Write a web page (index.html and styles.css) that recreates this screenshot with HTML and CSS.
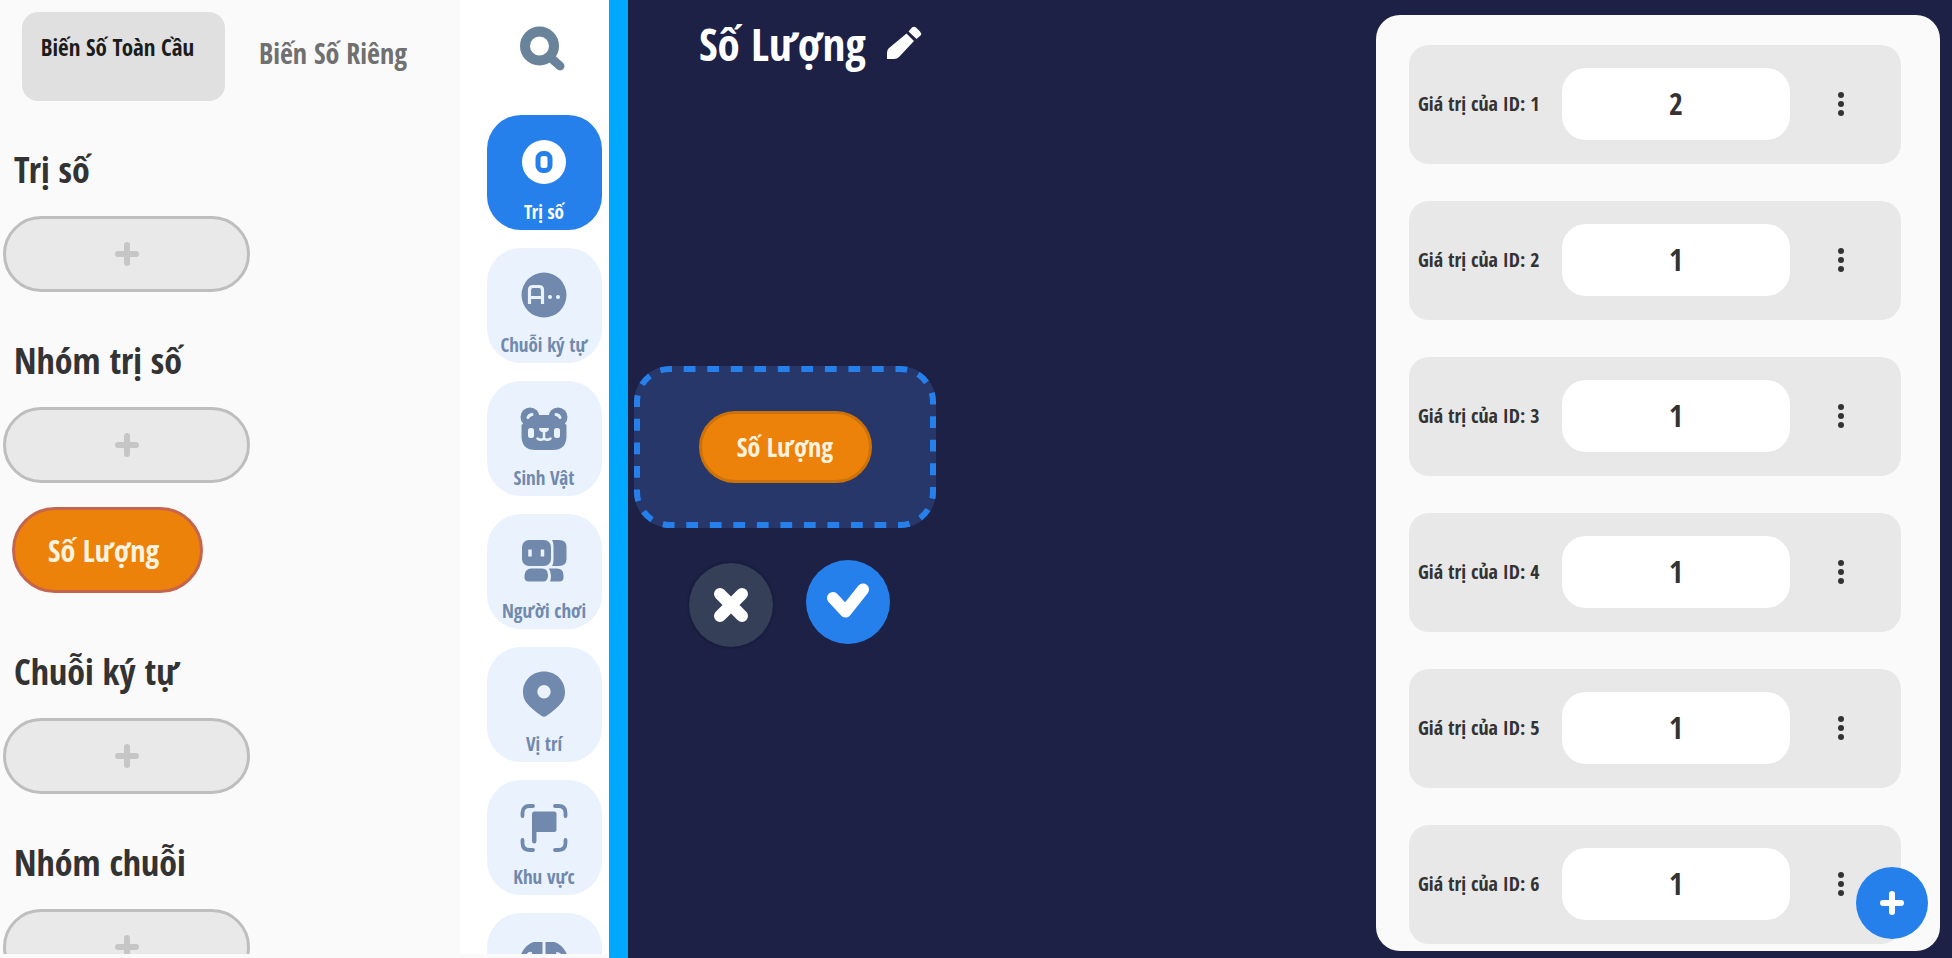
FILE: index.html
```
<!DOCTYPE html>
<html lang="vi">
<head>
<meta charset="utf-8">
<meta name="viewport" content="width=device-width, initial-scale=1">
<title>Số Lượng</title>
<link rel="stylesheet" href="styles.css">
</head>
<body>
<svg class="symbols" aria-hidden="true">
  <symbol id="plus" viewBox="0 0 24 24"><path d="M12 3v18M3 12h18" fill="none" stroke="currentColor" stroke-width="6" stroke-linecap="round"/></symbol>
  <symbol id="dots" viewBox="0 0 8 26"><circle cx="4" cy="4" r="3"/><circle cx="4" cy="13" r="3"/><circle cx="4" cy="22" r="3"/></symbol>
</svg>
<div class="app">
  <aside class="variables">
    <div class="tabs" role="tablist">
      <button class="tab tab-active" role="tab" aria-selected="true">Biến Số Toàn Cầu</button>
      <button class="tab" role="tab" aria-selected="false">Biến Số Riêng</button>
    </div>
    <section class="group">
      <h2>Trị số</h2>
      <button class="add" aria-label="Trị số"><svg><use href="#plus"/></svg></button>
    </section>
    <section class="group">
      <h2>Nhóm trị số</h2>
      <button class="add" aria-label="Nhóm trị số"><svg><use href="#plus"/></svg></button>
      <button class="variable">Số Lượng</button>
    </section>
    <section class="group">
      <h2>Chuỗi ký tự</h2>
      <button class="add" aria-label="Chuỗi ký tự"><svg><use href="#plus"/></svg></button>
    </section>
    <section class="group">
      <h2>Nhóm chuỗi</h2>
      <button class="add" aria-label="Nhóm chuỗi"><svg><use href="#plus"/></svg></button>
    </section>
  </aside>

  <nav class="rail">
    <button class="search" aria-label="Tìm kiếm">
      <svg viewBox="0 0 48 48"><circle cx="19.500" cy="21" r="14.500" fill="none" stroke="#69839a" stroke-width="10"/><path d="M31 33l9 8" stroke="#69839a" stroke-width="9" stroke-linecap="round"/></svg>
    </button>
    <button class="tile tile-active">
      <svg viewBox="0 0 48 48"><circle cx="24" cy="23" r="22" fill="#fff"/><rect x="18" y="14.500" width="12" height="17" rx="5" fill="none" stroke="#2680eb" stroke-width="5"/></svg>
      <span>Trị số</span>
    </button>
    <button class="tile">
      <svg viewBox="0 0 48 48"><circle cx="24" cy="23" r="22.500" fill="#7089ac"/><path d="M9.500 32V18q0-3.500 3.500-3.500h6q3.500 0 3.500 3.500v14M9.500 25.500h13" fill="none" stroke="#eaf2fe" stroke-width="3.200"/><circle cx="30" cy="25" r="2" fill="#eaf2fe"/><circle cx="38" cy="25" r="2" fill="#eaf2fe"/></svg>
      <span>Chuỗi ký tự</span>
    </button>
    <button class="tile">
      <svg viewBox="0 0 48 48"><g fill="#7089ac"><circle cx="10" cy="12" r="9.500"/><circle cx="38" cy="12" r="9.500"/><path d="M12 10h24l10.500 10V31q0 14-14 14h-17q-14 0-14-14V20z"/></g><g fill="none" stroke="#eaf2fe" stroke-linecap="round"><path d="M8 12.500q1-2.500 4-3M40 12.500q-1-2.500-4-3" stroke-width="3"/><path d="M24 27v7M17.500 33.500q3 2.500 6.500 0q3.500 2.500 6.500 0" stroke-width="2.500"/></g><g fill="#eaf2fe"><rect x="8" y="23" width="6" height="10" rx="2.500"/><rect x="34" y="23" width="6" height="10" rx="2.500"/><path d="M19 23h10q0 4-5 4.500q-5-.5-5-4.500z"/></g></svg>
      <span>Sinh Vật</span>
    </button>
    <button class="tile">
      <svg viewBox="0 0 48 48"><g fill="#7089ac"><rect x="2" y="2" width="29" height="26" rx="7"/><path d="M32 2h7q7.500 0 7.500 7v12q0 7-7.500 7h-7q1.500-2 1.500-7V9q0-5-1.500-7z"/><path d="M11 30.500h11q6 0 6 7q0 6-5 6H9q-4.500 0-4.500-4v-2.500q1-6.500 6.500-6.500z"/><path d="M29 30.500h8q6.500 0 6.500 7v2q0 4-4 4H30q1-2 1-5.500t-2-7.500z"/></g><path d="M10 11.500v7M22.500 11.500v7" stroke="#eaf2fe" stroke-width="3.500"/></svg>
      <span>Người chơi</span>
    </button>
    <button class="tile">
      <svg viewBox="0 0 48 48"><path fill-rule="evenodd" fill="#7089ac" d="M24 0.500C12 0.500 3 9.500 3 21c0 9 5 14 18 23.500q3 2.500 6 0C40 35 45 30 45 21 45 9.500 36 .5 24 .5zm0 13.500a6.700 6.700 0 1 1 0 13.400 6.700 6.700 0 0 1 0-13.400z"/></svg>
      <span>Vị trí</span>
    </button>
    <button class="tile">
      <svg viewBox="0 0 48 48"><path d="M2.500 12V9q0-7 7-7H13M35 2h3.500q7 0 7 7v3M2.500 36v3q0 7 7 7H13M35 46h3.500q7 0 7-7v-3" fill="none" stroke="#7089ac" stroke-width="3.800" stroke-linecap="round"/><path fill="#7089ac" d="M14.500 7.500H34q2.500 0 2.500 2.500v15.500q0 2.500-2.500 2.500H16.500V37q0 2.500-2.250 2.500T12 37V10q0-2.500 2.500-2.500z"/></svg>
      <span>Khu vực</span>
    </button>
    <button class="tile" aria-label="Khác">
      <svg viewBox="0 0 48 48"><path fill="#7089ac" d="M22.500 5v18H0q0-6 4.500-11.500T14 5zM25.500 5v18H48q0-6-4.500-11.500T34 5z"/><path fill="#eaf2fe" d="M6 18q2-4 6-3v4zM36 15q5 0 6 4h-5z"/></svg>
    </button>
  </nav>

  <main class="editor">
    <header class="title">
      <h1>Số Lượng</h1>
      <button class="edit" aria-label="Sửa tên">
        <svg viewBox="0 0 36 36"><path d="M20.500 8.500L28 16L13 32Q11 34 8 34H1V28Q1 25 2.500 23.500zM22.500 6.500L26 2.500Q28 .8 30 2.500L34 6.500Q36 8.500 34.500 10.500L30.500 14z" fill="#fff"/></svg>
      </button>
    </header>
    <div class="workspace">
      <div class="drop">
        <svg class="outline" viewBox="0 0 302 162"><rect x="3" y="3" width="296" height="156" rx="33" pathLength="864" fill="none" stroke="#2680eb" stroke-width="6" stroke-dasharray="12 12" stroke-dashoffset="10"/></svg>
        <button class="block">Số Lượng</button>
      </div>
      <div class="actions">
        <button class="round cancel" aria-label="Hủy"><svg viewBox="0 0 84 84"><path d="M31 31l22 22M53 31L31 53" stroke="#fff" stroke-width="12" stroke-linecap="round"/></svg></button>
        <button class="round confirm" aria-label="Xác nhận"><svg viewBox="0 0 84 84"><path d="M27 38l12.500 13.500L57 29.500" fill="none" stroke="#fff" stroke-width="12" stroke-linecap="round" stroke-linejoin="round"/></svg></button>
      </div>
    </div>
  </main>

  <div class="values-column">
    <section class="values">
      <div class="row"><label for="v1">Giá trị của ID: 1</label><input id="v1" type="text" value="2"><button class="more" aria-label="Tùy chọn 1"><svg><use href="#dots"/></svg></button></div>
      <div class="row"><label for="v2">Giá trị của ID: 2</label><input id="v2" type="text" value="1"><button class="more" aria-label="Tùy chọn 2"><svg><use href="#dots"/></svg></button></div>
      <div class="row"><label for="v3">Giá trị của ID: 3</label><input id="v3" type="text" value="1"><button class="more" aria-label="Tùy chọn 3"><svg><use href="#dots"/></svg></button></div>
      <div class="row"><label for="v4">Giá trị của ID: 4</label><input id="v4" type="text" value="1"><button class="more" aria-label="Tùy chọn 4"><svg><use href="#dots"/></svg></button></div>
      <div class="row"><label for="v5">Giá trị của ID: 5</label><input id="v5" type="text" value="1"><button class="more" aria-label="Tùy chọn 5"><svg><use href="#dots"/></svg></button></div>
      <div class="row"><label for="v6">Giá trị của ID: 6</label><input id="v6" type="text" value="1"><button class="more" aria-label="Tùy chọn 6"><svg><use href="#dots"/></svg></button></div>
    </section>
    <button class="fab" aria-label="Thêm giá trị"><svg viewBox="0 0 72 72"><path d="M36 27v18M27 36h18" stroke="#fff" stroke-width="6" stroke-linecap="round"/></svg></button>
  </div>
</div>
</body>
</html>
```

FILE: styles.css
```
* { box-sizing: border-box; }

body {
  margin: 0;
  background: #fafafa;
  color: #333;
  font-family: "Open Sans Condensed", "Roboto Condensed", "Open Sans", sans-serif;
  font-weight: 700;
}

h1, h2 { margin: 0; font-weight: 700; }

button {
  margin: 0;
  padding: 0;
  border: 0;
  background: none;
  color: inherit;
  font: inherit;
  cursor: pointer;
}

svg { display: block; }

.symbols { position: absolute; width: 0; height: 0; }

.app {
  display: grid;
  grid-template-columns: 460px 149px 1fr 576px;
  height: 100vh;
  overflow: hidden;
}

/* Variable list */
.variables {
  display: flex;
  flex-direction: column;
  margin-bottom: 4px;
  overflow: hidden;
  background: #fafafa;
}

.tabs {
  display: flex;
  flex: none;
  gap: 34px;
  padding: 12px 22px 47px;
}

.tab {
  padding-bottom: 8px;
  color: #707070;
  font-size: 28px;
}

.tab-active {
  width: 203px;
  height: 89px;
  padding: 0 12px 20px 0;
  border-radius: 16px;
  background: #e0e0e0;
  color: #1c1c1c;
  font-size: 23px;
}

.group {
  display: flex;
  flex: none;
  flex-direction: column;
  align-items: flex-start;
  gap: 24px;
  padding: 0 3px 47px;
}

.group h2 {
  padding-left: 11px;
  font-size: 36px;
  line-height: 44px;
}

.add {
  display: grid;
  place-items: center;
  width: 247px;
  height: 76px;
  border: 3px solid #bebebe;
  border-radius: 38px;
  background: #e9e9e9;
  color: #c6c6c6;
}

.add svg { width: 24px; height: 24px; }

.variable {
  margin: 0 9px 10px;
  padding: 0 33px;
  width: 191px;
  height: 86px;
  border: 3px solid #c5654e;
  border-radius: 43px;
  background: #ec8209;
  color: #fff3e0;
  font-size: 30px;
  text-align: left;
}

/* Category rail */
.rail {
  display: flex;
  flex-direction: column;
  align-items: center;
  gap: 18px;
  margin-bottom: 4px;
  padding-left: 19px;
  overflow: hidden;
  background: #fff;
}

.search {
  flex: none;
  height: 97px;
}

.search svg { width: 48px; height: 48px; }

.tile {
  display: flex;
  flex: none;
  flex-direction: column;
  align-items: center;
  gap: 9px;
  width: 115px;
  height: 115px;
  padding-top: 24px;
  border-radius: 34px;
  background: #eaf2fe;
  color: #7089ac;
  font-size: 19px;
  line-height: 32px;
}

.tile svg { width: 48px; height: 48px; }

.tile-active { background: #2680eb; color: #fff; }

/* Editor */
.editor {
  border-left: 19px solid #00a9ff;
  background: #1c2145;
}

.title {
  display: flex;
  align-items: center;
  gap: 20px;
  height: 86px;
  padding-left: 71px;
  color: #fff;
}

.title h1 { font-size: 45px; }

.edit svg { width: 36px; height: 36px; }

.workspace {
  display: flex;
  flex-direction: column;
  align-items: flex-start;
  gap: 32px;
  padding: 280px 6px 0;
}

.drop {
  position: relative;
  display: grid;
  place-items: center;
  width: 302px;
  height: 162px;
  border-radius: 36px;
  background: #27376a;
}

.outline {
  position: absolute;
  inset: 0;
  width: 100%;
  height: 100%;
}

.block {
  width: 173px;
  height: 72px;
  border: 3px solid #cd7206;
  border-radius: 36px;
  background: #ec8209;
  color: #fff3e0;
  font-size: 26px;
}

.actions {
  display: flex;
  gap: 33px;
  padding-left: 55px;
}

.round {
  width: 84px;
  height: 84px;
  border-radius: 50%;
}

.cancel {
  margin-top: 3px;
  background: #363f58;
  box-shadow: 0 0 3px #12162f;
}

.confirm { background: #2680eb; }

/* Value list */
.values-column {
  position: relative;
  display: flex;
  height: 100vh;
  padding: 15px 12px 7px 0;
  background: #1c2145;
}

.values {
  display: flex;
  flex: 1;
  flex-direction: column;
  gap: 37px;
  padding: 30px 39px 0 33px;
  overflow: hidden;
  border-radius: 24px;
  background: #fafafa;
}

.row {
  display: grid;
  flex: none;
  grid-template-columns: 144px 1fr 102px;
  align-items: center;
  height: 119px;
  padding: 0 9px 2px;
  border-radius: 20px;
  background: #e8e8e8;
}

.row label { font-size: 20px; }

.row input {
  width: 100%;
  height: 72px;
  padding: 0;
  border: 0;
  border-radius: 24px;
  background: #fff;
  color: #333;
  font: inherit;
  font-size: 30px;
  text-align: center;
}

.more {
  display: grid;
  place-items: center;
  height: 72px;
  fill: #333;
}

.more svg { width: 8px; height: 26px; }

.fab {
  position: absolute;
  right: 24px;
  bottom: 19px;
  width: 72px;
  height: 72px;
  border-radius: 50%;
  background: #2680eb;
}
```
